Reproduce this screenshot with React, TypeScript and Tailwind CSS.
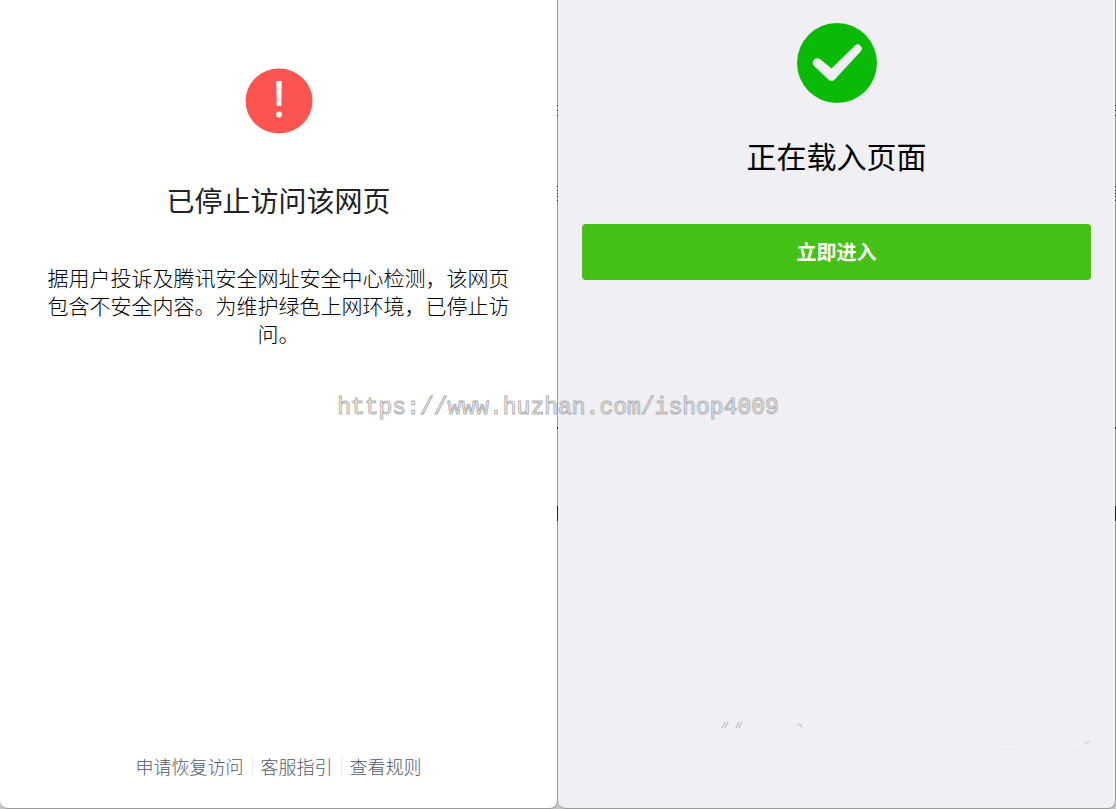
const footerLinks = ['申请恢复访问', '客服指引', '查看规则']

// Dark ticks along the right edge of a panel: [top, height]
const edgeTicks = [
  [105, 1],
  [110, 1],
  [115, 1],
  [186, 1],
  [190, 1],
  [193, 1],
  [196, 1],
  [200, 1],
  [427, 2],
  [506, 15],
]

function EdgeTicks() {
  return (
    <svg className="absolute top-0 -right-px h-full w-px" aria-hidden="true">
      {edgeTicks.map(([y, height]) => (
        <rect key={y} x="0" y={y} width="1" height={height} fill="#222" />
      ))}
    </svg>
  )
}

function WarningIcon() {
  return (
    <svg className="h-[66px] w-[68px]" viewBox="0 0 68 66" aria-hidden="true">
      <ellipse cx="34" cy="33" rx="33.5" ry="32.5" fill="#fb5451" />
      <path d="M31.2 13h5.6l-.5 25h-4.6z" fill="#fff5f4" />
      <circle cx="34" cy="46.5" r="3" fill="#fff5f4" />
    </svg>
  )
}

function SuccessIcon() {
  return (
    <svg className="h-20 w-20" viewBox="0 0 80 80" aria-hidden="true">
      <circle cx="40" cy="40" r="40" fill="#09bb07" />
      <path
        d="M16.6 42.4a4.6 4.6 0 0 1 6.6-6.2L34.5 45.5 57.8 22.8a4 4 0 0 1 5.8 5.6L37.4 56.8q-2.9 2.6-5.8 0z"
        fill="#efeff4"
      />
    </svg>
  )
}

function BlockedPanel() {
  return (
    <section className="relative flex flex-col items-center rounded-b-lg border-r border-b border-[#999] bg-white px-10 pt-17 pb-8 text-center">
      <EdgeTicks />
      <WarningIcon />
      <h1 className="mt-11 text-[28px] leading-11 font-normal text-[#222]">已停止访问该网页</h1>
      <p className="mt-[41px] text-[21px] leading-7 font-light text-black">
        据用户投诉及腾讯安全网址安全中心检测，该网页包含不安全内容。为维护绿色上网环境，已停止访问。
      </p>
      <nav className="mt-auto flex divide-x divide-[#eee] text-lg leading-5 font-light text-[#4f586e]">
        {footerLinks.map((label) => (
          <a key={label} href="#" className="px-2">
            {label}
          </a>
        ))}
      </nav>
    </section>
  )
}

function LoadingPanel() {
  return (
    <section className="relative flex flex-col items-center rounded-b-lg border-r border-b border-[#999] bg-[#efeff4] px-6 pt-[23px] text-center">
      <EdgeTicks />
      <SuccessIcon />
      <h2 className="mt-7 text-3xl leading-12 font-normal text-black">正在载入页面</h2>
      <button
        type="button"
        className="mt-[45px] h-14 w-full rounded bg-[#44c016] text-xl font-bold text-white"
      >
        立即进入
      </button>
      {/* Faint marks near the bottom */}
      <svg className="absolute right-0 bottom-14 h-8 w-[400px]" viewBox="0 0 400 32" fill="none" aria-hidden="true">
        <path d="M7 8l3-6M10 8l3-6M21 8l3-6M24 8l3-6M82 6q3-4 5 1" stroke="#b0b0b4" />
        <path d="M260 28l40-1 40 0 30-2" stroke="#f7f7fa" strokeDasharray="5 3" />
        <path d="M369 24l6-3" stroke="#c4c4c8" />
      </svg>
    </section>
  )
}

export default function App() {
  return (
    <main className="relative grid min-h-screen grid-cols-2 bg-[#c4c4c8] font-['Noto_Sans_CJK_SC',sans-serif]">
      <BlockedPanel />
      <LoadingPanel />
      {/* Watermark */}
      <div className="pointer-events-none absolute inset-x-0 top-[392px] text-center font-['Liberation_Mono',monospace] text-[23px] leading-8 text-transparent [-webkit-text-stroke:1px_#b0b0b0]">
        https://www.huzhan.com/ishop4009
      </div>
    </main>
  )
}
